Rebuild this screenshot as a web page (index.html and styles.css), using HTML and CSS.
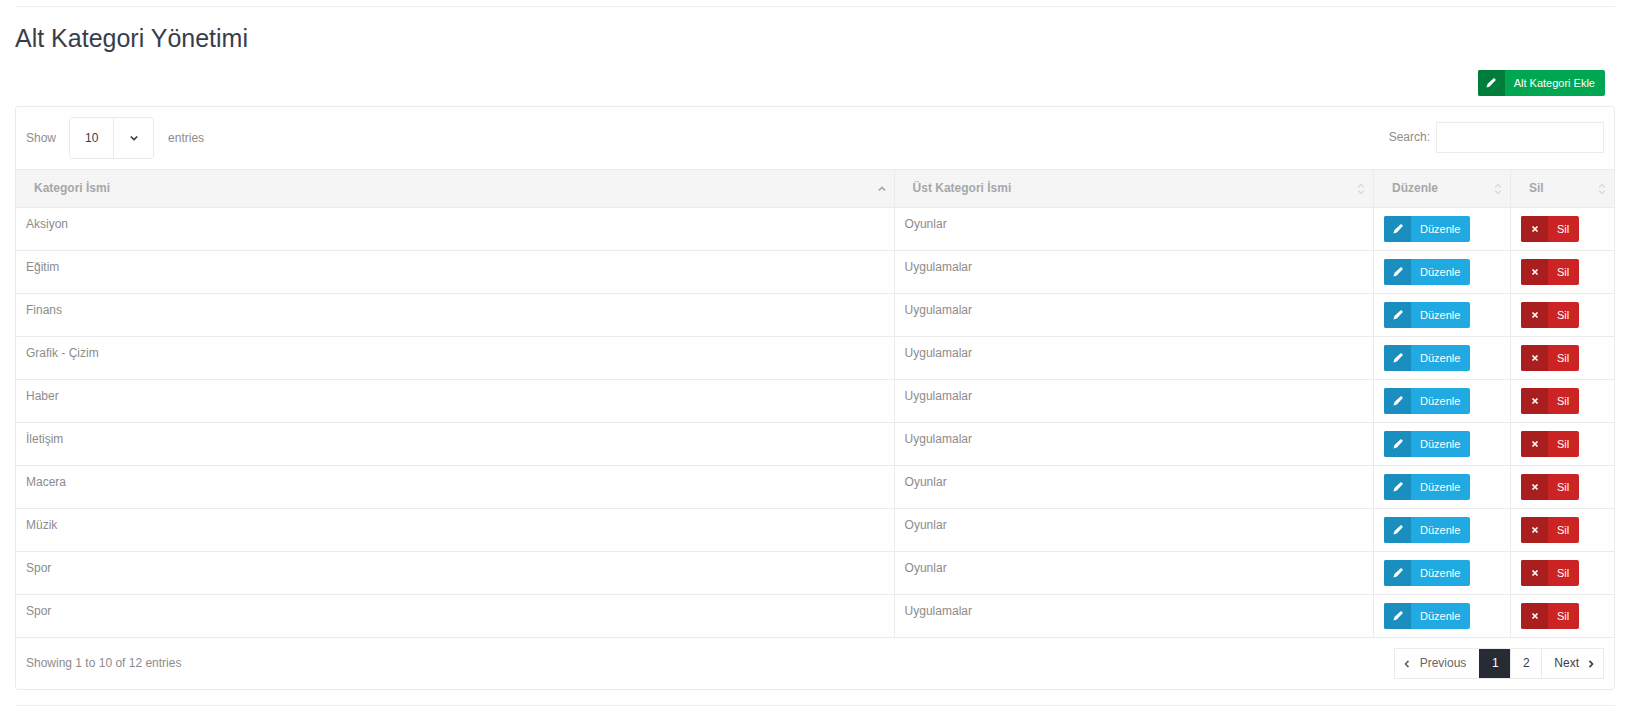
FILE: index.html
```html
<!DOCTYPE html>
<html lang="tr">
<head>
    <meta charset="UTF-8">
    <meta name="viewport" content="width=device-width, initial-scale=1.0">
    <title>Alt Kategori Yönetimi</title>
    <link rel="stylesheet" href="styles.css">
</head>
<body>
    <!-- Shared icons -->
    <svg class="sprite" aria-hidden="true">
        <symbol id="icon-pencil" viewBox="0 0 10 10">
            <path d="M7.4 0.5 Q8.2 0 9.1 0.8 Q10 1.8 9.4 2.6 L3.8 8.4 L0.4 9.6 L1.5 6 Z"/>
        </symbol>
        <symbol id="icon-cancel" viewBox="0 0 10 10">
            <path d="M2.5 2.5 L7.5 7.5 M7.5 2.5 L2.5 7.5"/>
        </symbol>
        <symbol id="icon-up" viewBox="0 0 10 10">
            <path d="M1.8 6.5 L5 3.5 L8.2 6.5"/>
        </symbol>
        <symbol id="icon-down" viewBox="0 0 10 10">
            <path d="M1.8 3.5 L5 6.5 L8.2 3.5"/>
        </symbol>
        <symbol id="icon-left" viewBox="0 0 10 10">
            <path d="M6.5 1.8 L3.5 5 L6.5 8.2"/>
        </symbol>
        <symbol id="icon-right" viewBox="0 0 10 10">
            <path d="M3.5 1.8 L6.5 5 L3.5 8.2"/>
        </symbol>
        <symbol id="icon-sort" viewBox="0 0 10 12">
            <path d="M2 4.5 L5 1.5 L8 4.5 M2 7.5 L5 10.5 L8 7.5"/>
        </symbol>
    </svg>

    <main class="main-content">
        <hr>
        <h2>Alt Kategori Yönetimi</h2>

        <div class="actions">
            <button type="button" class="btn btn-green"><span class="btn-icon"><svg class="pencil"><use href="#icon-pencil"/></svg></span><span class="btn-text">Alt Kategori Ekle</span></button>
        </div>

        <div class="panel">
            <div class="toolbar">
                <div class="length">
                    <label for="length">Show</label>
                    <div class="select-box">
                        <select id="length">
                            <option>10</option>
                            <option>25</option>
                            <option>50</option>
                            <option>100</option>
                        </select>
                        <span class="select-arrow"><svg class="stroke"><use href="#icon-down"/></svg></span>
                    </div>
                    <span>entries</span>
                </div>
                <div class="search">
                    <label for="search">Search:</label>
                    <input type="text" id="search">
                </div>
            </div>

            <table>
                <thead>
                    <tr>
                        <th class="col-name"><div class="th-inner">Kategori İsmi <svg class="stroke"><use href="#icon-up"/></svg></div></th>
                        <th class="col-parent"><div class="th-inner">Üst Kategori İsmi <svg class="sort"><use href="#icon-sort"/></svg></div></th>
                        <th class="col-edit"><div class="th-inner">Düzenle <svg class="sort"><use href="#icon-sort"/></svg></div></th>
                        <th class="col-delete"><div class="th-inner">Sil <svg class="sort"><use href="#icon-sort"/></svg></div></th>
                    </tr>
                </thead>
                <tbody id="rows"></tbody>
            </table>

            <div class="table-footer">
                <div>Showing 1 to 10 of 12 entries</div>
                <nav class="pagination">
                    <a href="#" class="prev"><svg class="stroke"><use href="#icon-left"/></svg>Previous</a>
                    <a href="#" class="active">1</a>
                    <a href="#">2</a>
                    <a href="#" class="next">Next<svg class="stroke"><use href="#icon-right"/></svg></a>
                </nav>
            </div>
        </div>
        <hr>
    </main>

    <script src="script.js"></script>
</body>
</html>
```
FILE: styles.css
```css
body {
    margin: 0;
    font-family: "Liberation Sans", Arial, sans-serif;
    font-size: 12px;
    line-height: 17px;
    background: #fff;
    color: #8c8c8c;
}

.sprite {
    display: none;
}

.main-content {
    padding: 6px 14px 0 15px;
}

hr {
    margin: 0;
    border: 0;
    border-top: 1px solid #eee;
}

h2 {
    margin: 17px 0;
    font-size: 25px;
    font-weight: normal;
    line-height: 28px;
    color: #373e4a;
}

svg {
    display: block;
    width: 10px;
    height: 10px;
    fill: currentColor;
}

.stroke {
    fill: none;
    stroke: currentColor;
    stroke-width: 1.7;
}

/* Buttons */
.actions {
    display: flex;
    justify-content: flex-end;
    padding: 1px 10px 10px;
}

.btn {
    display: inline-flex;
    padding: 0;
    border: 0;
    border-radius: 2px;
    overflow: hidden;
    font: 11px/26px "Liberation Sans", Arial, sans-serif;
    color: #fff;
    cursor: pointer;
}

.btn-icon {
    display: flex;
    align-items: center;
    justify-content: center;
    width: 27px;
    height: 26px;
}

.btn-text {
    padding: 0 10px 0 9px;
}

.btn-green {
    background: #00a651;
}

.btn-green .btn-icon {
    background: #007d3d;
}

.btn-blue {
    background: #21a9e1;
}

.btn-blue .btn-icon {
    background: #1a8fbf;
}

.btn-red {
    background: #cc2424;
}

.btn-red .btn-icon {
    background: #a91e1f;
}

/* Panel */
.panel {
    margin-bottom: 15px;
    border: 1px solid #ebebeb;
    border-radius: 3px;
}

.toolbar,
.table-footer {
    display: flex;
    align-items: center;
    justify-content: space-between;
    padding: 10px;
}

.length,
.search {
    display: flex;
    align-items: center;
}

.select-box {
    position: relative;
    margin: 0 14px 0 13px;
}

select {
    appearance: none;
    display: block;
    box-sizing: border-box;
    width: 85px;
    height: 42px;
    padding: 0 15px;
    border: 1px solid #ebebeb;
    border-radius: 3px;
    background: #fff;
    font: inherit;
    color: #373e4a;
}

.select-arrow {
    position: absolute;
    top: 1px;
    right: 1px;
    bottom: 1px;
    display: flex;
    align-items: center;
    justify-content: center;
    width: 39px;
    border-left: 1px solid #ebebeb;
    color: #373e4a;
    pointer-events: none;
}

.search {
    gap: 6px;
    padding-bottom: 1px;
}

.search input {
    box-sizing: border-box;
    width: 168px;
    height: 31px;
    padding: 6px 12px;
    border: 1px solid #ebebeb;
    font: inherit;
}

/* Table */
table {
    width: 100%;
    border-collapse: separate;
    border-spacing: 0;
    table-layout: fixed;
}

th,
td {
    box-sizing: border-box;
    border-right: 1px solid #ebebeb;
    border-bottom: 1px solid #ebebeb;
    text-align: left;
    vertical-align: top;
}

th:last-child,
td:last-child {
    border-right: 0;
}

th {
    padding: 10px 7px 10px 18px;
    border-top: 1px solid #ebebeb;
    background: #f5f5f6;
    color: #a6a7aa;
}

td {
    padding: 8px 10px;
}

.col-parent {
    width: 30%;
}

.col-edit {
    width: 137px;
}

.col-delete {
    width: 103px;
}

.th-inner {
    display: flex;
    align-items: center;
    justify-content: space-between;
}

.sort {
    height: 12px;
    fill: none;
    stroke: #dcdcde;
    stroke-width: 1.5;
}

td .btn {
    display: flex;
}

.cancel {
    fill: none;
    stroke: currentColor;
    stroke-width: 1.7;
}

/* Pagination */
.pagination {
    display: flex;
    border: 1px solid #ebebeb;
}

.pagination a {
    display: flex;
    align-items: center;
    justify-content: center;
    min-width: 30px;
    height: 29px;
    border-left: 1px solid #ebebeb;
    color: #373e4a;
    text-decoration: none;
}

.pagination .prev {
    gap: 8px;
    padding: 0 13px 0 7px;
    border-left: 0;
    color: #666;
}

.pagination .next {
    gap: 7px;
    padding: 0 7px 0 12px;
}

.pagination .active {
    border-color: #272b34;
    background: #272b34;
    color: #fff;
}
```
FILE: script.js
```js
const categories = [
    ['Aksiyon', 'Oyunlar'],
    ['Eğitim', 'Uygulamalar'],
    ['Finans', 'Uygulamalar'],
    ['Grafik - Çizim', 'Uygulamalar'],
    ['Haber', 'Uygulamalar'],
    ['İletişim', 'Uygulamalar'],
    ['Macera', 'Oyunlar'],
    ['Müzik', 'Oyunlar'],
    ['Spor', 'Oyunlar'],
    ['Spor', 'Uygulamalar']
];

// Render one table row per category
document.getElementById('rows').innerHTML = categories.map(([name, parent]) => `
    <tr>
        <td>${name}</td>
        <td>${parent}</td>
        <td><button type="button" class="btn btn-blue"><span class="btn-icon"><svg class="pencil"><use href="#icon-pencil"/></svg></span><span class="btn-text">Düzenle</span></button></td>
        <td><button type="button" class="btn btn-red"><span class="btn-icon"><svg class="cancel"><use href="#icon-cancel"/></svg></span><span class="btn-text">Sil</span></button></td>
    </tr>
`).join('');
```
